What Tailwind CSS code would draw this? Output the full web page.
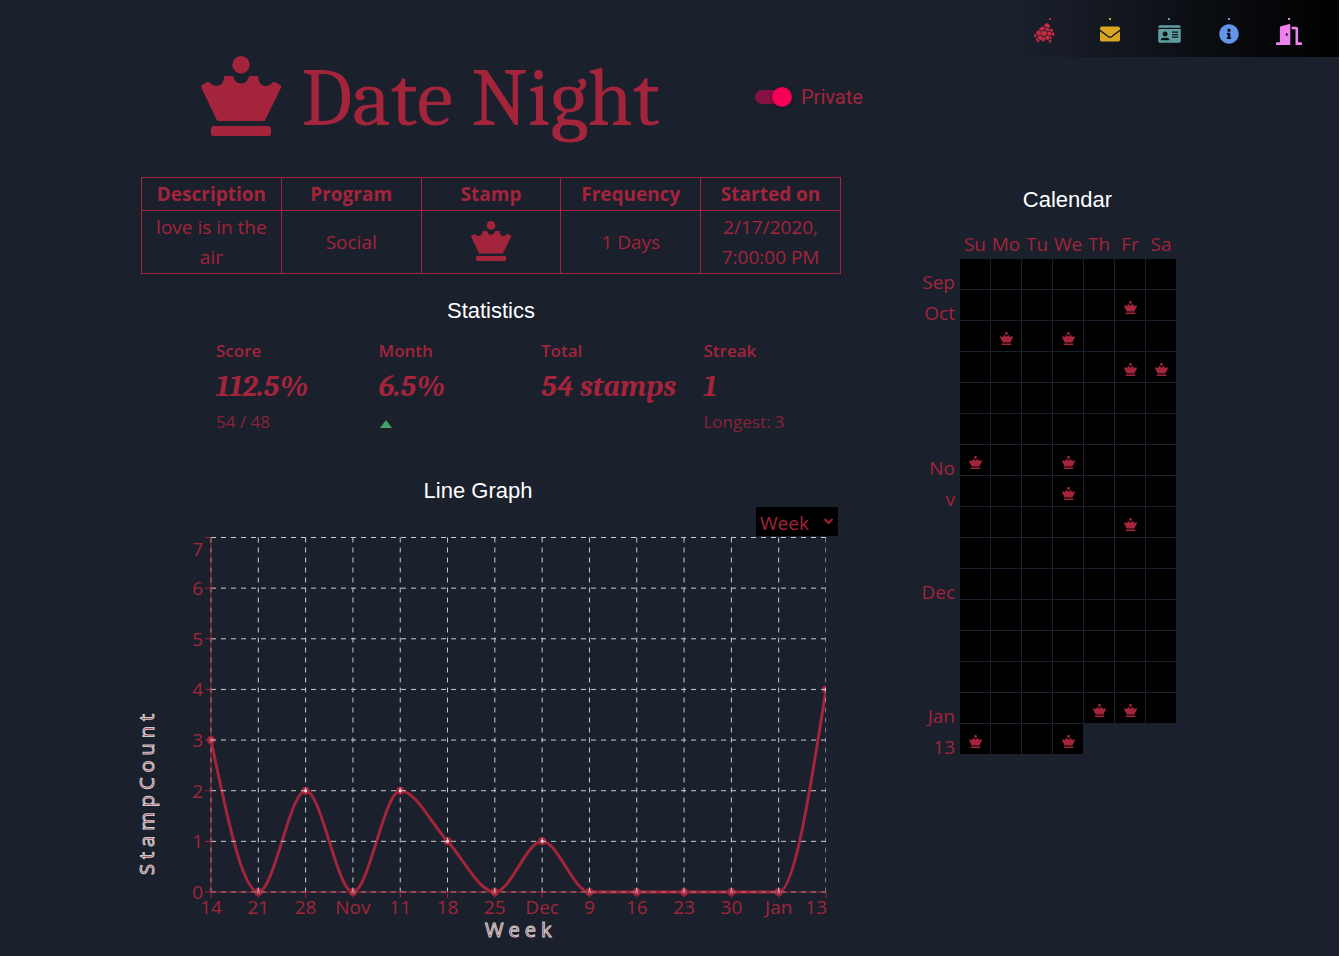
<!DOCTYPE html>
<html lang="en">
<head>
<meta charset="utf-8">
<meta name="viewport" content="width=device-width, initial-scale=1">
<title>Date Night</title>
<script src="https://cdn.jsdelivr.net/npm/@tailwindcss/browser@4"></script>
</head>
<body class="min-h-screen border-r border-white bg-[#1a202c] font-['Segoe_UI','Open_Sans',sans-serif] text-[19px] text-[#a3243b]">
<svg class="hidden" aria-hidden="true">
  <symbol id="queen" viewBox="0 0 512 512">
    <path fill="currentColor" d="M256 0a56 56 0 1 0 0 112a56 56 0 0 0 0-112zM432 448H80a16 16 0 0 0-16 16v32a16 16 0 0 0 16 16h352a16 16 0 0 0 16-16v-32a16 16 0 0 0-16-16zM504.9 184.2l-28.5-15.9c-7.4-5-16.9-2.5-22.3 4.7a47.6 47.6 0 0 1-47.2 18.2C383.7 186.9 368 164.9 368 140.4a12.4 12.4 0 0 0-12.4-12.4h-38.8c-6 0-11.6 4-12.9 9.9a48 48 0 0 1-93.9 0c-1.2-5.9-6.8-9.9-12.9-9.9h-38.7a12.4 12.4 0 0 0-12.4 12.4c0 24.5-15.7 46.5-38.8 50.7a47.6 47.6 0 0 1-47.2-18.2c-5.4-7.1-14.9-9.7-22.3-4.7l-28.5 15.9a15 15 0 0 0-6.4 20.1L104 416h304L511.3 204.3a15 15 0 0 0-6.4-20.1z"/>
  </symbol>
</svg>

<header class="flex items-start justify-between pl-[201px]">
  <div class="flex h-[136px] items-end">
    <div class="flex h-20 items-center">
      <svg class="size-20 shrink-0" aria-hidden="true"><use href="#queen"/></svg>
      <h1 class="ml-5 w-[454px] pt-1.5 font-[Cambria,'Liberation_Serif',serif] text-[82px] leading-none whitespace-nowrap">Date Night</h1>
      <label class="flex items-center gap-[9px] pt-0.5 font-[Roboto,sans-serif] text-[20px]">
        <span class="relative flex h-5 w-[37px] items-center">
          <input type="checkbox" role="switch" checked class="peer absolute inset-0 z-10 m-0 cursor-pointer opacity-0">
          <span class="h-3.5 w-[34px] rounded-full bg-[#881144]"></span>
          <span class="absolute right-0 size-5 rounded-full bg-[#f50057] shadow-[0_1px_3px_rgba(0,0,0,0.5)]"></span>
        </span>
        Private
      </label>
    </div>
  </div>
  <nav aria-label="Main" class="flex h-[57px] w-[319px] shrink-0 bg-linear-to-r/srgb from-[#1a202c] to-black pr-5">
    <a href="#home" aria-label="Home" class="flex flex-1 flex-col items-center pt-[18px] text-[#c52c42]"><span class="size-0.5 bg-[#dc143c]"></span>
      <svg class="mt-0.5 -ml-3 size-[22px]" viewBox="0 0 22 22" fill="currentColor" stroke="currentColor" stroke-width="0.5" stroke-linejoin="round" aria-hidden="true">
        <path d="M12 2.2Q14 .4 16 2.6L17 5 14.6 5.6 11.6 4.2zM7.2 5.8L10.8 4.8 11.6 7 8.6 8.6 6 7.6zM12.6 6L15.8 6.8 16.2 8.4 13.6 8.8 12.2 7.6zM17 7L19.8 7.4 19.4 9.6 17.2 9zM4.6 8.6L7.8 9.4 7.4 12.4 4.6 13 3.4 11zM9.4 9.2L12.6 9 14 11.6 11.8 14 8.8 13.4 8.2 11.4zM14.8 9.8L17.8 10 18.6 12.4 16.6 14 14.8 12zM19.4 10.6L21.4 11 20.8 14 19.2 13zM2.4 12L3.8 14 1.6 15.2 1 13.2zM5 14.2L7.8 13.8 9.4 16 7.6 18 5.4 17zM12.4 14.8L14.8 13.2 16.6 15.2 15.4 17.8 13 17.4zM10 15L11.4 15.4 12 18 10.4 19.4 8.6 18.4zM17.6 15L19 15.2 18 17 16.8 17zM4 15.6L4.6 17.8 6.6 19 4.8 20 3 17.8zM15.8 18.4L17.8 18 18 20.2 16.6 20.6z"/>
      </svg></a>
    <a href="#mail" aria-label="Mail" class="flex flex-1 flex-col items-center pt-[18px] text-[#daa520]"><span class="size-0.5 bg-current"></span>
      <svg class="mt-1 size-5" viewBox="0 0 512 512" fill="currentColor" aria-hidden="true"><path d="M502.3 190.8c3.9-3.1 9.7-.2 9.7 4.7V400c0 26.500-21.500 48-48 48H48c-26.500 0-48-21.500-48-48V195.600c0-5 5.700-7.800 9.700-4.700 22.400 17.400 52.100 39.500 154.100 113.600 21.100 15.400 56.700 47.800 92.200 47.600 35.700.3 72-32.800 92.300-47.600 102-74.100 131.600-96.300 154-113.700zM256 320c23.200.4 56.600-29.200 73.400-41.400 132.700-96.300 142.800-104.700 173.400-128.700 5.800-4.500 9.200-11.500 9.200-18.900v-19c0-26.500-21.500-48-48-48H48c-26.500 0-48 21.500-48 48v19c0 7.400 3.400 14.300 9.200 18.900 30.600 23.900 40.700 32.400 173.400 128.700 16.800 12.200 50.200 41.800 73.400 41.400z"/></svg></a>
    <a href="#profile" aria-label="Profile" class="flex flex-1 flex-col items-center pt-[18px] text-[#5f9ea0]"><span class="size-0.5 bg-current"></span>
      <svg class="mt-1 h-5 w-[23px]" viewBox="0 0 576 512" fill="currentColor" aria-hidden="true"><path d="M528 32H48C21.500 32 0 53.500 0 80v16h576V80c0-26.500-21.500-48-48-48zM0 432c0 26.500 21.500 48 48 48h480c26.500 0 48-21.500 48-48V128H0v304zm352-232c0-4.400 3.600-8 8-8h144c4.400 0 8 3.600 8 8v16c0 4.400-3.600 8-8 8H360c-4.400 0-8-3.600-8-8v-16zm0 64c0-4.400 3.600-8 8-8h144c4.400 0 8 3.600 8 8v16c0 4.400-3.600 8-8 8H360c-4.400 0-8-3.600-8-8v-16zm0 64c0-4.400 3.600-8 8-8h144c4.400 0 8 3.600 8 8v16c0 4.400-3.600 8-8 8H360c-4.400 0-8-3.600-8-8v-16zM176 192c35.300 0 64 28.700 64 64s-28.700 64-64 64-64-28.700-64-64 28.700-64 64-64zM67.100 396.200C75.500 370.500 99.600 352 128 352h8.200c12.300 5.100 25.700 8 39.800 8s27.600-2.900 39.800-8h8.200c28.400 0 52.500 18.500 60.900 44.200 3.200 9.900-5.200 19.800-15.600 19.800H82.700c-10.400 0-18.800-10-15.600-19.800z"/></svg></a>
    <a href="#about" aria-label="About" class="flex flex-1 flex-col items-center pt-[18px] text-[#6495ed]"><span class="size-0.5 bg-current"></span>
      <svg class="mt-1 size-5" viewBox="0 0 512 512" fill="currentColor" aria-hidden="true"><path d="M256 8C119 8 8 119 8 256s111 248 248 248 248-111 248-248S393 8 256 8zm0 110c23.200 0 42 18.800 42 42s-18.800 42-42 42-42-18.800-42-42 18.800-42 42-42zm56 254c0 6.600-5.400 12-12 12h-88c-6.600 0-12-5.400-12-12v-24c0-6.600 5.400-12 12-12h12v-64h-12c-6.600 0-12-5.400-12-12v-24c0-6.600 5.400-12 12-12h64c6.600 0 12 5.400 12 12v100h12c6.600 0 12 5.400 12 12v24z"/></svg></a>
    <a href="#logout" aria-label="Log out" class="flex flex-1 flex-col items-center pt-[18px] text-[#ee82ee]"><span class="size-0.5 bg-current"></span>
      <svg class="mt-1 h-[21px] w-[26px]" viewBox="0 0 640 512" fill="currentColor" aria-hidden="true"><path d="M624 448h-80V113.450C544 86.190 522.470 64 496 64H384v64h96v384h144c8.840 0 16-7.160 16-16v-32c0-8.840-7.160-16-16-16zM312.240 1.010l-192 49.740C105.990 54.440 96 67.700 96 82.920V448H16c-8.840 0-16 7.160-16 16v32c0 8.840 7.160 16 16 16h336V33.180c0-21.580-19.560-37.410-39.760-32.170zM264 288c-13.250 0-24-14.330-24-32s10.750-32 24-32 24 14.330 24 32-10.750 32-24 32z"/></svg></a>
  </nav>
</header>

<main class="grid grid-cols-[minmax(0,700px)_295px] justify-center gap-x-[79px] pt-[41px] pr-[124px] pl-[141px]">
  <div>
    <table class="w-full table-fixed border-collapse text-center leading-[30px]">
      <thead>
        <tr>
          <th scope="col" class="border border-[#a3243b] p-px">Description</th>
          <th scope="col" class="border border-[#a3243b] p-px">Program</th>
          <th scope="col" class="border border-[#a3243b] p-px">Stamp</th>
          <th scope="col" class="border border-[#a3243b] p-px">Frequency</th>
          <th scope="col" class="border border-[#a3243b] p-px">Started on</th>
        </tr>
      </thead>
      <tbody>
        <tr>
          <td class="border border-[#a3243b] px-2 py-px">love is in the air</td>
          <td class="border border-[#a3243b] px-2 py-px">Social</td>
          <td class="border border-[#a3243b] px-2 pt-px pb-1"><svg class="mx-auto size-10" role="img" aria-label="Queen stamp"><use href="#queen"/></svg></td>
          <td class="border border-[#a3243b] px-2 py-px">1 Days</td>
          <td class="border border-[#a3243b] px-2 py-px">2/17/2020, 7:00:00 PM</td>
        </tr>
      </tbody>
    </table>

    <section>
      <h2 class="mt-[21px] text-center font-[Arial,'Liberation_Sans',sans-serif] text-[22px] leading-8 text-white">Statistics</h2>
      <dl class="mt-3 -mr-[25px] grid grid-cols-4 pl-[75px] text-[17px]">
        <div><dt class="leading-6 font-semibold">Score</dt><dd class="font-[Cambria,'Liberation_Serif',serif] text-[30px] leading-[47px] font-bold whitespace-nowrap italic">112.5%</dd><dd class="leading-6 opacity-80">54 / 48</dd></div>
        <div><dt class="leading-6 font-semibold">Month</dt><dd class="font-[Cambria,'Liberation_Serif',serif] text-[30px] leading-[47px] font-bold whitespace-nowrap italic">6.5%</dd><dd class="flex h-6 items-center"><svg class="mt-1 ml-px h-2 w-3" viewBox="0 0 12 8" role="img" aria-label="increased"><path d="M6 0L12 8H0z" fill="#43a067"/></svg></dd></div>
        <div><dt class="leading-6 font-semibold">Total</dt><dd class="font-[Cambria,'Liberation_Serif',serif] text-[30px] leading-[47px] font-bold whitespace-nowrap italic">54 stamps</dd></div>
        <div><dt class="leading-6 font-semibold">Streak</dt><dd class="font-[Cambria,'Liberation_Serif',serif] text-[30px] leading-[47px] font-bold whitespace-nowrap italic">1</dd><dd class="leading-6 opacity-80">Longest: 3</dd></div>
      </dl>
    </section>

    <section>
      <h2 class="mt-[41px] pr-[26px] text-center font-[Arial,'Liberation_Sans',sans-serif] text-[22px] leading-8 text-white">Line Graph</h2>
      <div class="flex justify-end pr-[3px]">
        <div class="relative h-[29px] w-[82px]">
          <select aria-label="Graph interval" class="size-full appearance-none bg-black pt-0.5 pl-1 leading-7"><option>Week</option><option>Month</option></select>
          <svg class="pointer-events-none absolute top-[11px] right-1 h-[7px] w-[11px]" viewBox="0 0 11 7" fill="none" stroke="currentColor" stroke-width="2" aria-hidden="true"><path d="M1.500 1l4 4 4-4"/></svg>
        </div>
      </div>
      <svg id="chart" class="w-full overflow-visible" viewBox="0 0 700 410" fill="currentColor" role="img" aria-label="Stamp count per week"></svg>
    </section>
  </div>

  <section>
    <h2 class="mt-[7px] text-center font-[Arial,'Liberation_Sans',sans-serif] text-[22px] leading-8 text-white">Calendar</h2>
    <div class="mt-[13px] grid grid-cols-[35px_216px] gap-x-[5px]">
      <div></div>
      <div class="grid h-[30px] grid-cols-7 gap-px text-center leading-[30px]">
        <span class="flex justify-center">Su</span><span class="flex justify-center">Mo</span><span class="flex justify-center">Tu</span><span class="flex justify-center">We</span><span class="flex justify-center">Th</span><span class="flex justify-center">Fr</span><span class="flex justify-center">Sa</span>
      </div>
      <div class="grid auto-rows-[31px] pt-2 text-right leading-[31px] break-all">
        <span class="row-start-1">Sep</span>
        <span class="row-start-2">Oct</span>
        <span class="row-start-7">Nov</span>
        <span class="row-start-11">Dec</span>
        <span class="row-start-15">Jan</span>
        <span class="row-start-16">13</span>
      </div>
      <div id="days" class="grid auto-rows-[30px] grid-cols-7 content-start gap-px"></div>
    </div>
  </section>
</main>

<script>
  // Calendar: one cell per day, a stamp on the marked ones
  const stamped = new Set([12, 15, 17, 26, 27, 42, 45, 52, 61, 102, 103, 105, 108]);
  let cells = '';
  for (let day = 0; day < 109; day++) {
    cells += '<div class="flex items-center justify-center bg-black pt-1 pl-px">' +
      (stamped.has(day) ? '<svg class="size-[13px]" aria-hidden="true"><use href="#queen"/></svg>' : '') + '</div>';
  }
  document.getElementById('days').innerHTML = cells;

  // Line graph: monotone cubic curve through the weekly counts
  const counts = [3, 0, 2, 0, 2, 1, 0, 1, 0, 0, 0, 0, 0, 4];
  const weeks = ['14', '21', '28', 'Nov', '11', '18', '25', 'Dec', '9', '16', '23', '30', 'Jan', '13'];
  const left = 70, right = 685, top7 = 1.500, bottom = 356;
  const step = (right - left) / (counts.length - 1), unit = (bottom - top7) / 7;
  const px = i => left + i * step, py = v => bottom - v * unit;
  const ys = counts.map(py), last = counts.length - 1;
  const slope = i => (ys[i + 1] - ys[i]) / step;
  const tangents = ys.map((_, i) => {
    if (i === 0 || i === last) return 0;
    const a = slope(i - 1), b = slope(i);
    return (Math.sign(a) + Math.sign(b)) * Math.min(Math.abs(a), Math.abs(b), Math.abs(a + b) / 4) || 0;
  });
  tangents[0] = (3 * slope(0) - tangents[1]) / 2;
  tangents[last] = (3 * slope(last - 1) - tangents[last - 1]) / 2;
  let curve = `M${px(0)} ${ys[0]}`;
  for (let i = 0; i < last; i++) {
    const t = step / 3;
    curve += `C${px(i) + t} ${ys[i] + t * tangents[i]} ${px(i + 1) - t} ${ys[i + 1] - t * tangents[i + 1]} ${px(i + 1)} ${ys[i + 1]}`;
  }
  let axes = `M${left} ${top7}V${bottom}H${right}`, grid = '', labels = '', dots = '';
  for (let v = 0; v <= 7; v++) {
    axes += `M${left - 6} ${py(v)}h6`;
    grid += `M${left} ${py(v)}H${right}`;
    labels += `<text x="${left - 8}" y="${v === 7 ? 20 : py(v) + 7}" text-anchor="end">${v}</text>`;
  }
  weeks.forEach((week, i) => {
    axes += `M${px(i)} ${bottom}v6`;
    grid += `M${px(i)} ${top7}V${bottom}`;
    labels += i === last
      ? `<text x="${right + 1}" y="378" text-anchor="end">${week}</text>`
      : `<text x="${px(i)}" y="378" text-anchor="middle">${week}</text>`;
    dots += `<circle cx="${px(i)}" cy="${ys[i]}" r="2.750"/>`;
  });
  document.getElementById('chart').innerHTML = `
    <clipPath id="plot"><rect x="60" y="-5" width="625" height="370"/></clipPath>
    <g clip-path="url(#plot)" stroke="#a3243b">
      <path d="${curve}" fill="none" stroke-width="3"/>
      <g fill="#fff" stroke-width="2.500">${dots}</g>
      <path d="${grid}" fill="none" stroke="#ccc" stroke-dasharray="5 5"/>
    </g>
    <path d="${axes}" fill="none" stroke="#a3243b"/>
    ${labels}
    <g class="text-[20px] tracking-[5px]" fill="#a3243b" stroke="#ccc">
      <text x="344" y="401">Week</text>
      <text transform="translate(13 339) rotate(-90)">StampCount</text>
    </g>`;
</script>
</body>
</html>
